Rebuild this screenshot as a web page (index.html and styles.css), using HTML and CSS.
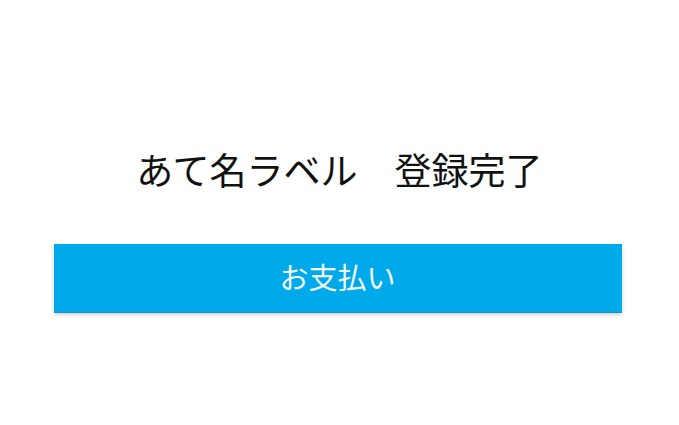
FILE: index.html
```html
<!DOCTYPE html>
<html lang="ja">
<head>
<meta charset="utf-8">
<link rel="stylesheet" href="styles.css">
</head>
<body>
<main class="page">
  <h1 class="title">あて名ラベル　登録完了</h1>
  <button class="pay">お支払い</button>
</main>
</body>
</html>
```
FILE: styles.css
```css
html, body {
  margin: 0;
  padding: 0;
  background: #ffffff;
}
body {
  font-family: "Noto Sans CJK JP", "Noto Sans", sans-serif;
  width: 679px;
  height: 425px;
  overflow: hidden;
}
.page {
  display: flex;
  flex-direction: column;
  align-items: center;
  padding-top: 145px;
}
.title {
  margin: 0;
  font-size: 37px;
  font-weight: 400;
  line-height: 48px;
  color: #111111;
  letter-spacing: 0;
}
.pay {
  margin-top: 51px;
  width: 568px;
  height: 69px;
  margin-left: -4px;
  padding: 0 0 4px 0;
  border: 0;
  border-bottom: 1px solid #1a8fbe;
  background: #00aaea;
  color: #f2f9fd;
  font-family: inherit;
  font-size: 29px;
  font-weight: 400;
  box-shadow: 0 2px 4px rgba(0, 0, 0, 0.18);
}
```
